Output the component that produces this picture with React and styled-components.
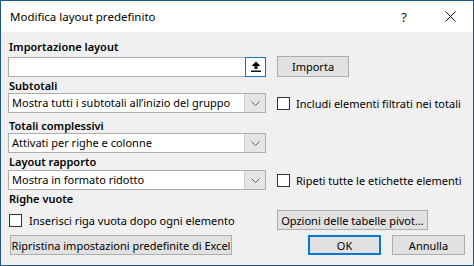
import styled, { createGlobalStyle } from "styled-components";

const GlobalStyle = createGlobalStyle`
  html, body {
    margin: 0;
    padding: 0;
    background: #ffffff;
  }
  body {
    font-family: "Noto Sans", "Open Sans", sans-serif;
    font-size: 11px;
    color: #000;
  }
`;

const Window = styled.div`
  width: 474px;
  height: 266px;
  box-sizing: border-box;
  border: 1px solid #1c5687;
  background: #f0f0f0;
  display: flex;
  flex-direction: column;
`;

const TitleBar = styled.div`
  height: 31px;
  flex-shrink: 0;
  background: #ffffff;
  display: flex;
  align-items: center;
  padding-left: 9px;
  font-size: 11.5px;
`;

const Title = styled.div`
  flex: 1;
  margin-top: -1px;
`;

const TitleButton = styled.div`
  width: 46px;
  height: 31px;
  display: flex;
  align-items: center;
  justify-content: center;
  font-size: 13px;
  color: #111;
`;

const Body = styled.div`
  flex: 1;
  padding: 0 7px 0 7px;
  display: flex;
  flex-direction: column;
`;

const SectionLabel = styled.div`
  height: 14px;
  line-height: 14px;
  margin-top: ${(p) => p.$top || 0}px;
  padding-left: 1px;
  font-weight: 600;
  font-size: 11px;
`;

const Row = styled.div`
  display: grid;
  grid-template-columns: 258px 1fr;
  column-gap: 11px;
  align-items: center;
  margin-top: ${(p) => p.$top || 0}px;
  height: ${(p) => p.$h || 20}px;
`;

const Field = styled.div`
  height: 20px;
  box-sizing: border-box;
  border: 1px solid #adadad;
  background: #ffffff;
  display: flex;
  align-items: stretch;
`;

const FieldText = styled.div`
  flex: 1;
  padding-left: 3px;
  line-height: 18px;
  white-space: nowrap;
  overflow: hidden;
`;

const UploadButton = styled.div`
  width: 21px;
  margin: -1px -1px -1px 0;
  box-sizing: border-box;
  border: 1px solid #0078d7;
  background: #ffffff;
  display: flex;
  align-items: center;
  justify-content: center;
`;

const DropButton = styled.div`
  width: 20px;
  border-left: 1px solid #cfcfcf;
  background: #e5e5e5;
  display: flex;
  align-items: center;
  justify-content: center;
`;

const Button = styled.button`
  font-family: inherit;
  font-size: 11px;
  color: #000;
  height: ${(p) => p.$h || 20}px;
  width: ${(p) => p.$w}px;
  box-sizing: border-box;
  background: #e1e1e1;
  border: ${(p) => (p.$default ? "2px solid #0078d7" : "1px solid #adadad")};
  padding: 0;
  margin: 0;
  display: flex;
  align-items: center;
  justify-content: center;
  white-space: nowrap;
`;

const CheckRow = styled.label`
  display: flex;
  align-items: center;
  gap: ${(p) => p.$gap || 6}px;
  padding-left: ${(p) => p.$pad || 0}px;
  white-space: nowrap;
`;

const Box = styled.span`
  width: 13px;
  height: 13px;
  box-sizing: border-box;
  border: 1px solid #333333;
  background: #ffffff;
  flex-shrink: 0;
`;

const Footer = styled.div`
  margin-top: 5px;
  height: 20px;
  display: flex;
  justify-content: space-between;
  align-items: center;
  padding-left: 2px;
  padding-right: 1px;
`;

const ButtonGroup = styled.div`
  display: flex;
  gap: 11px;
`;

const UploadIcon = () => (
  <svg width="10" height="11" viewBox="0 0 10 11">
    <path d="M5 0.5 L9.5 5 L6.5 5 L6.5 8 L3.5 8 L3.5 5 L0.5 5 Z" fill="#000" />
    <rect x="0" y="9.5" width="10" height="1.4" fill="#000" />
  </svg>
);

const Chevron = () => (
  <svg width="9" height="5" viewBox="0 0 9 5">
    <path d="M0.5 0.5 L4.5 4.5 L8.5 0.5" fill="none" stroke="#606060" strokeWidth="1" />
  </svg>
);

const CloseIcon = () => (
  <svg width="11" height="11" viewBox="0 0 11 11">
    <path d="M0.5 0.5 L10.5 10.5 M10.5 0.5 L0.5 10.5" stroke="#111" strokeWidth="1" />
  </svg>
);

const Select = ({ value }) => (
  <Field>
    <FieldText>{value}</FieldText>
    <DropButton>
      <Chevron />
    </DropButton>
  </Field>
);

const Check = ({ children, gap, pad }) => (
  <CheckRow $gap={gap} $pad={pad}>
    <Box />
    {children}
  </CheckRow>
);

export default function App() {
  return (
    <>
      <GlobalStyle />
      <Window>
        <TitleBar>
          <Title>Modifica layout predefinito</Title>
          <TitleButton>?</TitleButton>
          <TitleButton>
            <CloseIcon />
          </TitleButton>
        </TitleBar>
        <Body>
          <SectionLabel $top={8}>Importazione layout</SectionLabel>
          <Row $top={2} $h={21}>
            <Field>
              <FieldText />
              <UploadButton>
                <UploadIcon />
              </UploadButton>
            </Field>
            <Button $w={72} $h={21}>Importa</Button>
          </Row>

          <SectionLabel $top={2}>Subtotali</SectionLabel>
          <Row>
            <Select value="Mostra tutti i subtotali all’inizio del gruppo" />
            <Check>Includi elementi filtrati nei totali</Check>
          </Row>

          <SectionLabel $top={6}>Totali complessivi</SectionLabel>
          <Row>
            <Select value="Attivati per righe e colonne" />
            <div />
          </Row>

          <SectionLabel $top={2}>Layout rapporto</SectionLabel>
          <Row $top={1}>
            <Select value="Mostra in formato ridotto" />
            <Check>Ripeti tutte le etichette elementi</Check>
          </Row>

          <SectionLabel $top={2}>Righe vuote</SectionLabel>
          <Row $top={4}>
            <Check gap={7} pad={1}>
              Inserisci riga vuota dopo ogni elemento
            </Check>
            <Button $w={151}>Opzioni delle tabelle pivot...</Button>
          </Row>

          <Footer>
            <Button $w={222}>Ripristina impostazioni predefinite di Excel</Button>
            <ButtonGroup>
              <Button $w={73} $default>
                OK
              </Button>
              <Button $w={73}>Annulla</Button>
            </ButtonGroup>
          </Footer>
        </Body>
      </Window>
    </>
  );
}
